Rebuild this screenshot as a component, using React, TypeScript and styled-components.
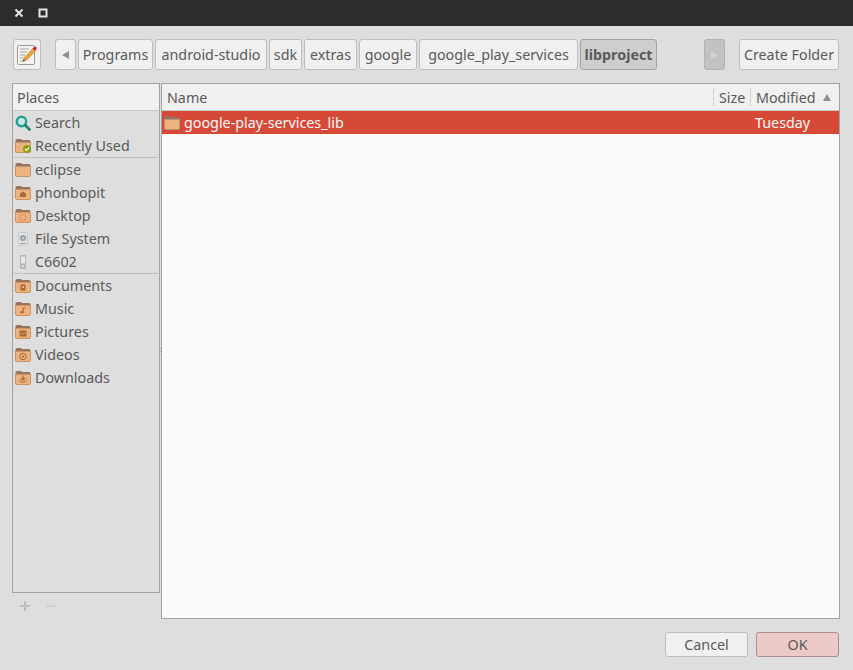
import type { ReactNode } from "react";
import styled, { createGlobalStyle } from "styled-components";

const GlobalStyle = createGlobalStyle`
  html, body {
    margin: 0;
    padding: 0;
    background: #dedede;
  }
  body {
    font-family: "Noto Sans", "Open Sans", sans-serif;
    font-size: 14.3px;
    color: #5a5a5a;
    overflow: hidden;
  }
`;

type FolderKind =
  | "plain"
  | "recent"
  | "home"
  | "desktop"
  | "documents"
  | "music"
  | "pictures"
  | "videos"
  | "downloads";

const FolderIcon = ({ kind }: { kind: FolderKind }) => {
  const dark = kind === "plain" || kind === "recent" ? "#9a6a45" : "#a5693d";
  const rim = kind === "plain" || kind === "recent" ? "#bd9672" : "#cf935e";
  return (
    <svg width="16" height="15" viewBox="0 0 16 15">
      <path d="M0.5 2.5 Q0.5 1 2 1 H6 L7 2 H14 Q15.5 2 15.5 3.5 V6 H0.5 Z" fill="#977460" />
      <path d="M0.5 4.5 H15.5 V13 Q15.5 14.5 14 14.5 H2 Q0.5 14.5 0.5 13 Z" fill="#edb27d" stroke={rim} strokeWidth="1" />
      {kind === "recent" && (
        <>
          <circle cx="12" cy="11" r="4" fill="#8f9e12" />
          <path d="M10 11 L11.5 12.5 L14 9.7" stroke="#fff" strokeWidth="1.1" fill="none" />
        </>
      )}
      {kind === "home" && <path d="M5 12 V8.5 L8 6.5 L11 8.5 V12 Z" fill={dark} />}
      {kind === "desktop" && (
        <path d="M5 7 H11 V12 H5 Z" stroke={dark} strokeWidth="0.8" strokeDasharray="1 1.4" fill="none" />
      )}
      {kind === "documents" && <path d="M5.5 6.5 H10.5 V12.5 H5.5 Z M7 10 H9 V8 H7 Z" fill={dark} fillRule="evenodd" />}
      {kind === "music" && (
        <>
          <path d="M8 7 H10.5 M8 7 V11" stroke={dark} strokeWidth="1.2" fill="none" />
          <ellipse cx="6.8" cy="11.3" rx="1.6" ry="1.2" fill={dark} />
        </>
      )}
      {kind === "pictures" && (
        <>
          <rect x="4.5" y="6.5" width="7" height="6" fill={dark} />
          <path d="M5 11 L7 8.8 L8.5 10 L9.7 9 L11 10.5" stroke="#edb27d" strokeWidth="0.7" fill="none" />
        </>
      )}
      {kind === "videos" && (
        <>
          <circle cx="8" cy="9.5" r="3.2" stroke={dark} strokeWidth="1" fill="none" />
          <path d="M7.2 8 L9.6 9.5 L7.2 11 Z" fill={dark} />
        </>
      )}
      {kind === "downloads" && (
        <>
          <path d="M8 5.5 V9 M6.3 8 L8 9.8 L9.7 8" stroke={dark} strokeWidth="1.2" fill="none" />
          <path d="M4.5 9.5 Q5 12.3 8 12.3 Q11 12.3 11.5 9.5" stroke={dark} strokeWidth="1" fill="none" />
        </>
      )}
    </svg>
  );
};

const SearchIcon = () => (
  <svg width="16" height="16" viewBox="0 0 16 16">
    <circle cx="6.5" cy="6.5" r="4.7" fill="#cfe7e4" stroke="#25a193" strokeWidth="2.4" />
    <path d="M10 10 L14.5 14.5" stroke="#1a8277" strokeWidth="2.6" strokeLinecap="round" />
  </svg>
);

const DriveIcon = () => (
  <svg width="16" height="16" viewBox="0 0 16 16">
    <rect x="3.5" y="1.5" width="9" height="13" rx="1" fill="#e0e3e4" stroke="#c4c8ca" />
    <circle cx="8" cy="7" r="3" fill="#9aa0a4" />
    <circle cx="8" cy="7" r="1" fill="#d5d8da" />
    <path d="M5 12.5 H11" stroke="#9aa0a4" />
  </svg>
);

const PhoneIcon = () => (
  <svg width="16" height="16" viewBox="0 0 16 16">
    <rect x="5" y="1" width="6" height="14" rx="1" fill="#b4b8bb" />
    <rect x="6" y="2.5" width="4" height="7" fill="#e6e8e9" />
    <circle cx="8" cy="12.3" r="1" fill="#e6e8e9" />
  </svg>
);

const EditIcon = () => (
  <svg width="22" height="22" viewBox="0 0 22 22">
    <rect x="1.5" y="1.5" width="17" height="19" rx="1" fill="#f4f3ee" stroke="#9b9b97" />
    <path d="M4 5 H13 M4 8 H11 M4 11 H9 M4 14 H7 M4 17 H7" stroke="#a4a4a0" strokeWidth="1" />
    <path d="M7 17.5 L8 14 L17 4.5 L19.5 7 L10.5 16 Z" fill="#eda43a" stroke="#a8701e" strokeWidth="0.6" />
    <path d="M16.6 4.8 L18 3 Q19 2 20.3 3.2 Q21.3 4.3 20.3 5.3 L19.2 6.8 Z" fill="#cc1f2d" />
    <path d="M7 17.5 L7.6 15.4 L9 16.8 Z" fill="#4a3a2a" />
  </svg>
);

const Window = styled.div`
  width: 853px;
  height: 670px;
  display: flex;
  flex-direction: column;
  background: #dedede;
`;

const TitleBar = styled.div`
  height: 26px;
  flex: none;
  display: flex;
  align-items: center;
  gap: 14px;
  padding-left: 14px;
  background: #2c2c2c;
`;

const TitleButton = styled.span`
  width: 10px;
  height: 10px;
  display: flex;
`;

const Content = styled.div`
  flex: 1;
  min-height: 0;
  display: flex;
  flex-direction: column;
  padding: 13px 13px 13px 12px;
`;

const Toolbar = styled.div`
  height: 31px;
  flex: none;
  display: flex;
  align-items: stretch;
`;

const Crumb = styled.button<{ $active?: boolean; $disabled?: boolean; $w: number; $gap?: number }>`
  width: ${(p) => p.$w}px;
  flex: none;
  margin: 0 0 0 ${(p) => p.$gap ?? 2}px;
  padding: 0;
  display: flex;
  align-items: center;
  justify-content: center;
  box-sizing: border-box;
  border-radius: 3px;
  border: 1px solid ${(p) => (p.$active ? "#a3a3a3" : p.$disabled ? "#b2b2b2" : "#bdbdbd")};
  background: ${(p) => (p.$active ? "#cecece" : p.$disabled ? "#c2c2c2" : "#f0f0f0")};
  color: #5a5a5a;
  font: ${(p) => (p.$active ? 700 : 400)} 14.3px "Noto Sans", "Open Sans", sans-serif;
`;

const Arrow = styled.span<{ $dir: "left" | "right"; $muted?: boolean }>`
  width: 0;
  height: 0;
  border-top: 4px solid transparent;
  border-bottom: 4px solid transparent;
  ${(p) =>
    p.$dir === "left"
      ? `border-right: 7px solid #8f8f8f;`
      : `border-left: 7px solid ${p.$muted ? "#d2d2d2" : "#8f8f8f"};`}
`;

const Panes = styled.div`
  margin-top: 13px;
  flex: 1;
  min-height: 0;
  display: flex;
  gap: 1px;
`;

const Sidebar = styled.div`
  width: 148px;
  flex: none;
  display: flex;
  flex-direction: column;
`;

const PlacesBox = styled.div`
  flex: 1;
  min-height: 0;
  box-sizing: border-box;
  border: 1px solid #a2a2a2;
  background: #dedede;
`;

const HeaderCell = styled.div<{ $w?: number; $divider?: boolean; $inset?: number }>`
  ${(p) => (p.$w ? `width: ${p.$w}px; flex: none;` : "flex: 1;")}
  box-sizing: border-box;
  height: 26px;
  padding-left: ${(p) => p.$inset ?? 6}px;
  display: flex;
  align-items: center;
  gap: 7px;
  background: #f0f0f0;
  position: relative;
  ${(p) =>
    p.$divider
      ? `&::before { content: ""; position: absolute; left: 0; top: 4px; bottom: 4px; width: 1px; background: #d4d4d4; }`
      : ""}
`;

const HeaderRow = styled.div`
  display: flex;
  flex: none;
  border-bottom: 1px solid #c8c8c8;
`;

const PlaceRow = styled.div`
  height: 23px;
  display: flex;
  align-items: center;
  gap: 4px;
  padding-left: 2px;
`;

const IconSlot = styled.span`
  width: 16px;
  height: 16px;
  flex: none;
  display: flex;
  align-items: center;
  justify-content: center;
`;

const Separator = styled.div`
  height: 1px;
  margin: 0 1px 0 1px;
  background: #bfbfbf;
`;

const PlaceActions = styled.div`
  height: 26px;
  flex: none;
  display: flex;
  align-items: center;
  gap: 16px;
  padding-left: 8px;
`;

const ActionGlyph = styled.span<{ $muted?: boolean }>`
  width: 10px;
  height: 10px;
  position: relative;
  display: block;
  &::before {
    content: "";
    position: absolute;
    left: 0;
    right: 0;
    top: 4px;
    height: 2px;
    background: ${(p) => (p.$muted ? "#d0d0d0" : "#bdbdbd")};
  }
  ${(p) =>
    p.$muted
      ? ""
      : `&::after { content: ""; position: absolute; top: 0; bottom: 0; left: 4px; width: 2px; background: #bdbdbd; }`}
`;

const FilePane = styled.div`
  flex: 1;
  min-width: 0;
  box-sizing: border-box;
  border: 1px solid #a2a2a2;
  background: #fafafa;
  position: relative;
`;

const FileRow = styled.div`
  height: 23px;
  display: flex;
  align-items: center;
  background: #d64937;
  color: #fafafa;
`;

const FileName = styled.div`
  flex: 1;
  display: flex;
  align-items: center;
  gap: 4px;
  padding-left: 2px;
`;

const FileModified = styled.div`
  width: 84px;
  flex: none;
`;

const SortArrow = styled.span`
  width: 0;
  height: 0;
  border-left: 4px solid transparent;
  border-right: 4px solid transparent;
  border-bottom: 7px solid #8f8f8f;
`;

const Grip = styled.span`
  position: absolute;
  left: -2px;
  top: 264px;
  width: 1px;
  height: 9px;
  background: repeating-linear-gradient(#b5b5b5 0 1px, transparent 1px 3px);
`;

const Footer = styled.div`
  margin-top: 13px;
  flex: none;
  display: flex;
  justify-content: flex-end;
  gap: 8px;
  padding-right: 1px;
`;

const DialogButton = styled.button<{ $primary?: boolean }>`
  width: 83px;
  height: 25px;
  padding: 0;
  box-sizing: border-box;
  border-radius: 3px;
  border: 1px solid ${(p) => (p.$primary ? "#a88f8b" : "#bdbdbd")};
  background: ${(p) => (p.$primary ? "#eccbc7" : "#f0f0f0")};
  color: #5a5a5a;
  font: 400 14.3px "Noto Sans", "Open Sans", sans-serif;
`;

const crumbs = [
  { label: "Programs", w: 75 },
  { label: "android-studio", w: 112 },
  { label: "sdk", w: 33 },
  { label: "extras", w: 53 },
  { label: "google", w: 58 },
  { label: "google_play_services", w: 159 },
];

const places: ({ label: string; icon: ReactNode } | { separator: true })[] = [
  { label: "Search", icon: <SearchIcon /> },
  { label: "Recently Used", icon: <FolderIcon kind="recent" /> },
  { separator: true },
  { label: "eclipse", icon: <FolderIcon kind="plain" /> },
  { label: "phonbopit", icon: <FolderIcon kind="home" /> },
  { label: "Desktop", icon: <FolderIcon kind="desktop" /> },
  { label: "File System", icon: <DriveIcon /> },
  { label: "C6602", icon: <PhoneIcon /> },
  { separator: true },
  { label: "Documents", icon: <FolderIcon kind="documents" /> },
  { label: "Music", icon: <FolderIcon kind="music" /> },
  { label: "Pictures", icon: <FolderIcon kind="pictures" /> },
  { label: "Videos", icon: <FolderIcon kind="videos" /> },
  { label: "Downloads", icon: <FolderIcon kind="downloads" /> },
];

export default function App() {
  return (
    <Window>
      <GlobalStyle />
      <TitleBar>
        <TitleButton>
          <svg width="10" height="10" viewBox="0 0 10 10">
            <path d="M1.5 1.5 L8.5 8.5 M8.5 1.5 L1.5 8.5" stroke="#e6e6e6" strokeWidth="2" />
          </svg>
        </TitleButton>
        <TitleButton>
          <svg width="10" height="10" viewBox="0 0 10 10">
            <rect x="1.5" y="1.5" width="7" height="7" fill="none" stroke="#e6e6e6" strokeWidth="2" />
          </svg>
        </TitleButton>
      </TitleBar>
      <Content>
        <Toolbar>
          <Crumb $w={28} $gap={1}>
            <EditIcon />
          </Crumb>
          <Crumb $w={21} $gap={14}>
            <Arrow $dir="left" />
          </Crumb>
          {crumbs.map((c) => (
            <Crumb key={c.label} $w={c.w}>
              {c.label}
            </Crumb>
          ))}
          <Crumb $w={77} $active>
            libproject
          </Crumb>
          <Crumb $w={21} $gap={47} $disabled>
            <Arrow $dir="right" $muted />
          </Crumb>
          <Crumb $w={100} $gap={14}>
            Create Folder
          </Crumb>
        </Toolbar>
        <Panes>
          <Sidebar>
            <PlacesBox>
              <HeaderRow>
                <HeaderCell $inset={4}>Places</HeaderCell>
              </HeaderRow>
              {places.map((p, i) =>
                "separator" in p ? (
                  <Separator key={i} />
                ) : (
                  <PlaceRow key={p.label}>
                    <IconSlot>{p.icon}</IconSlot>
                    {p.label}
                  </PlaceRow>
                )
              )}
            </PlacesBox>
            <PlaceActions>
              <ActionGlyph />
              <ActionGlyph $muted />
            </PlaceActions>
          </Sidebar>
          <FilePane>
            <Grip />
            <HeaderRow>
              <HeaderCell $inset={5}>Name</HeaderCell>
              <HeaderCell $w={37} $divider>
                Size
              </HeaderCell>
              <HeaderCell $w={89} $divider>
                Modified
                <SortArrow />
              </HeaderCell>
            </HeaderRow>
            <FileRow>
              <FileName>
                <IconSlot>
                  <FolderIcon kind="plain" />
                </IconSlot>
                google-play-services_lib
              </FileName>
              <FileModified>Tuesday</FileModified>
            </FileRow>
          </FilePane>
        </Panes>
        <Footer>
          <DialogButton>Cancel</DialogButton>
          <DialogButton $primary>OK</DialogButton>
        </Footer>
      </Content>
    </Window>
  );
}
